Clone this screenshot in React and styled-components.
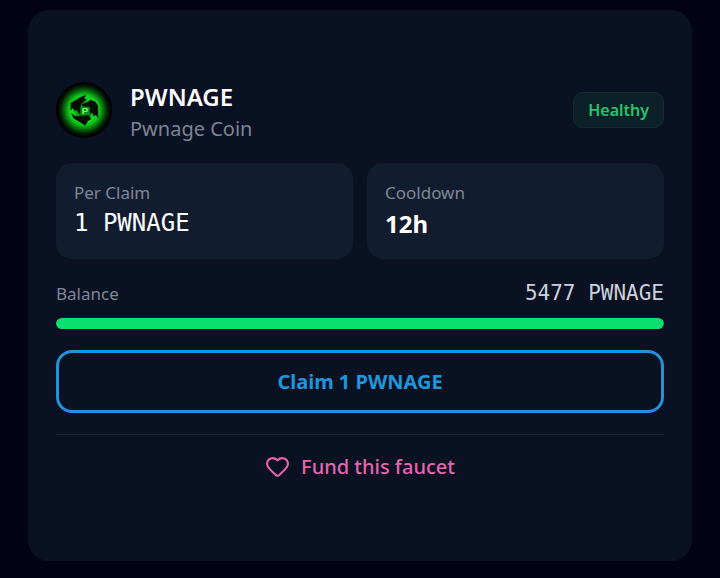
import styled, { createGlobalStyle } from 'styled-components'
import { Heart } from 'lucide-react'

const GlobalStyle = createGlobalStyle`
    *{
        box-sizing: border-box;
    }

    body{
        margin: 0;
        background: #010314;
        color: white;
        font-family: 'Noto Sans', 'Open Sans', sans-serif;
    }
`

const Page = styled.main`
    display: flex;
    flex-direction: column;
    min-height: 100vh;
    padding: 10px 28px 17px;
`

const Card = styled.article`
    display: flex;
    flex: 1;
    flex-direction: column;
    justify-content: center;
    padding: 28px;
    background: #0a1123;
    border-radius: 21px;
`

const Header = styled.header`
    display: flex;
    align-items: center;
    gap: 18px;
    margin-bottom: 21px;
`

const Logo = styled.svg`
    flex: none;
    width: 56px;
    height: 56px;
    border-radius: 50%;
`

const Names = styled.div`
    flex: 1;
    padding-top: 3px;

    h1{
        margin: 0;
        font-size: 24px;
        line-height: 32px;
        font-weight: 600;
    }

    p{
        margin: 3px 0 0;
        color: #7e8494;
        font-size: 20px;
        line-height: 26px;
    }
`

const Badge = styled.span`
    padding: 5px 14px;
    border: 1px solid #142c30;
    border-radius: 10px;
    background: #0c2127;
    color: #27c46c;
    font-size: 16px;
    line-height: 24px;
    font-weight: 600;
`

const Stats = styled.dl`
    display: grid;
    grid-template-columns: 1fr 1fr;
    gap: 14px;
    margin: 0 0 17px;
`

const Stat = styled.div`
    padding: 17px 18px;
    border-radius: 16px;
    background: #121c2f;

    dt{
        color: #7f8797;
        font-size: 17px;
        line-height: 25px;
    }

    dd{
        margin: 0;
        font-family: ${props => props.$mono ? "'DejaVu Sans Mono', monospace" : 'inherit'};
        font-size: 24px;
        line-height: 37px;
        font-weight: ${props => props.$mono ? 400 : 700};
    }
`

const BalanceRow = styled.div`
    display: flex;
    align-items: center;
    justify-content: space-between;
    margin-bottom: 7px;
    line-height: 35px;

    label{
        color: #7f8797;
        font-size: 17px;
    }

    output{
        color: #cbd0dc;
        font-family: 'DejaVu Sans Mono', monospace;
        font-size: 21px;
    }
`

const Track = styled.div`
    height: 11px;
    margin-bottom: 21px;
    overflow: hidden;
    border-radius: 6px;
    background: #1a2436;
`

const Fill = styled.div`
    height: 100%;
    border-radius: 6px;
    background: #0bdf70;
`

const ClaimButton = styled.button`
    width: 100%;
    height: 63px;
    border: 3px solid #2492d8;
    border-radius: 16px;
    background: transparent;
    color: #1f96dc;
    font-family: inherit;
    font-size: 20px;
    font-weight: 700;
    cursor: pointer;
`

const Footer = styled.footer`
    display: flex;
    justify-content: center;
    margin-top: 21px;
    padding: 9px 0 5px;
    border-top: 1px solid #1f2535;
`

const FundButton = styled.button`
    display: flex;
    align-items: center;
    gap: 11px;
    height: 44px;
    padding: 0;
    border: none;
    background: none;
    color: #e864ac;
    font-family: inherit;
    font-size: 20px;
    font-weight: 500;
    cursor: pointer;
`

const CoinLogo = () => (
    <Logo viewBox="18 19 168 168" role="img" aria-label="Pwnage Coin">
        <defs>
            <radialGradient id="glow" cx="0.5" cy="0.5" r="0.5">
                <stop offset="0" stopColor="#0a7a10" />
                <stop offset="0.25" stopColor="#0c9a14" />
                <stop offset="0.42" stopColor="#12e01c" />
                <stop offset="0.55" stopColor="#0fc218" />
                <stop offset="0.7" stopColor="#076a0c" />
                <stop offset="0.84" stopColor="#022005" />
                <stop offset="0.95" stopColor="#000000" />
            </radialGradient>
        </defs>
        <rect x="18" y="19" width="168" height="168" fill="url(#glow)" />
        <g fill="#021004">
            <path d="M62 82 L92 64 L108 57 L103 71 L112 70 L95 84 L91 94 L91 118 L80 104 L74 106 L68 98 L62 104 Z" />
            <path d="M111 80 L121 72 L136 78 L144 90 L145 128 L138 118 L131 122 L126 110 L120 118 L119 94 L97 92 L96 86 Z" />
            <path d="M64 113 L76 121 L91 120 L118 119 L123 131 L114 136 L106 150 L90 140 L70 128 Z" />
        </g>
        <text x="105" y="116" fill="#6dff78" fontFamily="Liberation Sans" fontSize="29" fontWeight="700" textAnchor="middle">P</text>
    </Logo>
)

const balance = 5477
const percent = 100

export default function App() {
    return (
        <>
            <GlobalStyle />
            <Page>
                <Card>
                    <Header>
                        <CoinLogo />
                        <Names>
                            <h1>PWNAGE</h1>
                            <p>Pwnage Coin</p>
                        </Names>
                        <Badge>Healthy</Badge>
                    </Header>
                    <Stats>
                        <Stat $mono>
                            <dt>Per Claim</dt>
                            <dd>1 PWNAGE</dd>
                        </Stat>
                        <Stat>
                            <dt>Cooldown</dt>
                            <dd>12h</dd>
                        </Stat>
                    </Stats>
                    <BalanceRow>
                        <label htmlFor="balance">Balance</label>
                        <output id="balance">{balance} PWNAGE</output>
                    </BalanceRow>
                    <Track role="progressbar" aria-label="Balance" aria-valuenow={percent}>
                        <Fill style={{ width: `${percent}%` }} />
                    </Track>
                    <ClaimButton type="button">Claim 1 PWNAGE</ClaimButton>
                    <Footer>
                        <FundButton type="button">
                            <Heart size={25} strokeWidth={2} />
                            Fund this faucet
                        </FundButton>
                    </Footer>
                </Card>
            </Page>
        </>
    )
}
